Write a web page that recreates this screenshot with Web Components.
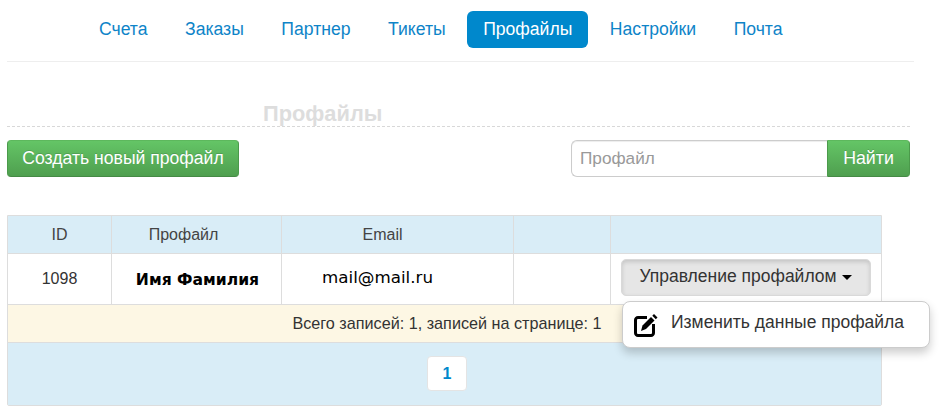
<!DOCTYPE html>
<html lang="ru">
<head>
<meta charset="utf-8">
<title>Профайлы</title>
<style>
html,body{margin:0;padding:0;background:#fff}
body{font-family:"Liberation Sans",Arial,sans-serif;color:#333;width:942px;height:411px;overflow:hidden}
</style>
</head>
<body>
<app-page>
  <main-nav>
    <nav-pill>Счета</nav-pill>
    <nav-pill>Заказы</nav-pill>
    <nav-pill>Партнер</nav-pill>
    <nav-pill>Тикеты</nav-pill>
    <nav-pill active>Профайлы</nav-pill>
    <nav-pill>Настройки</nav-pill>
    <nav-pill>Почта</nav-pill>
  </main-nav>
  <page-title>Профайлы</page-title>
  <tool-bar></tool-bar>
  <profile-table></profile-table>
</app-page>
<script>
function def(name, css, html){
  customElements.define(name, class extends HTMLElement{
    constructor(){
      super();
      this.attachShadow({mode:'open'}).innerHTML='<style>'+css+'</style>'+html;
    }
  });
}
const GREEN='background:linear-gradient(to bottom,#64c566,#4f9f4f);color:#fff;';
def('app-page',':host{display:block;padding:11px 0 0 7px;box-sizing:border-box;width:942px;height:411px;position:relative}','<slot></slot>');
def('main-nav',':host{display:flex;gap:5.5px;width:907px;height:51px;box-sizing:border-box;padding-left:76px;border-bottom:1px solid #eee}','<slot></slot>');
def('nav-pill',`:host{display:block;height:37px;line-height:37px;padding:0 16px;font-size:17.6px;color:#0e84c8;border-radius:6px;white-space:nowrap}
:host([active]){background:#0088cc;color:#fff}`,'<slot></slot>');
def('page-title',`:host{display:block;box-sizing:border-box;width:903px;height:65px;padding:39px 0 0 256px;font-size:21.8px;line-height:26px;font-weight:700;color:#ddd;border-bottom:1px dashed #d8d8d8}`,'<slot></slot>');
def('tool-bar',`:host{display:flex;justify-content:space-between;width:903px;height:37px;margin-top:13px}
button{font:17.6px/35px "Liberation Sans",Arial,sans-serif;${GREEN}border:1px solid #4b9a4b;border-top-color:#5db85d;border-bottom-color:#458a45;box-sizing:border-box;height:37px;padding:0;text-shadow:0 -1px 0 rgba(0,0,0,.15);margin:0}
.create{width:232px;border-radius:4px}
.search{display:flex}
input{box-sizing:border-box;width:256px;height:37px;border:1px solid #ccc;border-right:0;border-radius:6px 0 0 6px;font:17.2px "Liberation Sans",Arial,sans-serif;padding:0 8px;margin:0;outline:0;box-shadow:inset 0 1px 1px rgba(0,0,0,.075)}
input::placeholder{color:#999;opacity:1}
.find{width:83px;border-radius:0 4px 4px 0;font-size:17.8px}`,
`<button class="create">Создать новый профайл</button><div class="search"><input placeholder="Профайл"><button class="find">Найти</button></div>`);
def('profile-table',`:host{display:block;box-sizing:border-box;width:875px;margin-top:38px;border:1px solid #ddd;border-radius:0 0 2px 2px;font-size:16px;position:relative;color:#333}
.row{display:grid;grid-template-columns:103px 170px 232px 97px 1fr}
.row>div{border-left:1px solid #ddd;display:flex;align-items:center;justify-content:center;box-sizing:border-box;min-width:0}
.row>div:first-child{border-left:0}
.head{height:38px;background:#d9edf7;border-bottom:1px solid #ddd;box-sizing:border-box}
.head>div{font-size:16px;color:#444}
.body{height:51px;border-bottom:1px solid #ddd;box-sizing:border-box;background:#fff}
.id{padding-bottom:1px}
.info{height:38px;background:#fdf7e4;border-bottom:1px solid #ddd;box-sizing:border-box;display:flex;align-items:center;justify-content:center;padding-left:5px;font-size:16.2px}
.foot{height:62px;background:#d9edf7;display:flex;align-items:center;justify-content:center;box-sizing:border-box;padding-left:5px;padding-bottom:1px}
.page{box-sizing:border-box;width:40px;height:35px;background:#fff;border:1px solid #e4e4e4;border-radius:4px;color:#0088cc;font-weight:700;font-size:16px;display:flex;align-items:center;justify-content:center}
.name{font-family:"DejaVu Sans",Verdana,sans-serif;font-weight:700;font-size:15.6px;color:#000;padding-top:2px;padding-left:2px}
.mail{font-family:"DejaVu Sans",Verdana,sans-serif;font-size:16.7px;color:#000;padding-right:40px;padding-bottom:5px}
.pp{padding-right:26px}
.em{padding-right:30px}
.act{justify-content:flex-start!important;padding-left:10px;padding-bottom:3px}
.btn{box-sizing:border-box;width:250px;height:37px;background:#e6e6e6;border:1px solid #d9d9d9;border-radius:5px;box-shadow:inset 0 2px 4px rgba(0,0,0,.15);font-size:17.5px;color:#333;display:flex;align-items:center;justify-content:center;gap:5px;padding:0 1px 2px 0}
.caret{width:0;height:0;border-left:5px solid transparent;border-right:5px solid transparent;border-top:5px solid #000;margin-top:1px}
.menu{position:absolute;left:614px;top:85px;box-sizing:border-box;width:308px;height:47px;background:#fff;border:1px solid #ccc;border-radius:8px;box-shadow:0 5px 10px rgba(0,0,0,.2);display:flex;align-items:center;padding:0 0 0 11px;gap:11px;font-size:17.5px;color:#333;white-space:nowrap}
.menu span{padding-bottom:4px}
svg{display:block;flex:none}`,
`<div class="row head"><div>ID</div><div class="pp">Профайл</div><div class="em">Email</div><div></div><div></div></div>
<div class="row body"><div class="id">1098</div><div class="name">Имя Фамилия</div><div class="mail">mail@mail.ru</div><div></div><div class="act"><div class="btn">Управление профайлом<span class="caret"></span></div></div></div>
<div class="info">Всего записей: 1, записей на странице: 1</div>
<div class="foot"><div class="page">1</div></div>
<div class="menu"><svg width="26" height="25" viewBox="0 0 26 25" aria-hidden="true"><path d="M13 5.500H4A2.500 2.500 0 0 0 1.500 8v13A2.500 2.500 0 0 0 4 23.500h13a2.500 2.500 0 0 0 2.500-2.500V12" fill="none" stroke="#000" stroke-width="3"/><path d="M7 19l1.500-5.500L17 5l3.500 3.500-8.500 8.500z" fill="#000"/><path d="M18.300 3.700L20 2l3.500 3.500-1.700 1.700z" fill="#000"/></svg><span>Изменить данные профайла</span></div>`);
</script>
</body>
</html>
